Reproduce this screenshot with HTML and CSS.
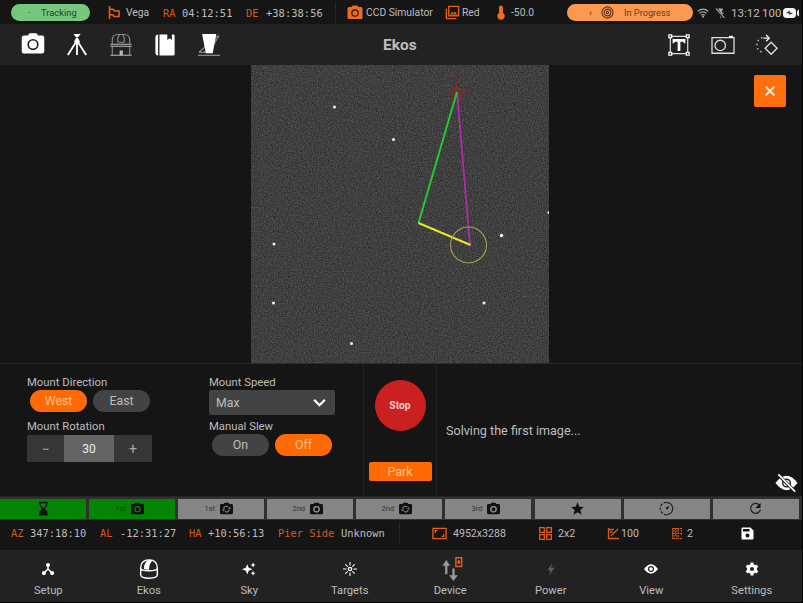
FILE: index.html
```html
<!DOCTYPE html>
<html lang="en">
<head>
<meta charset="utf-8">
<title>Ekos</title>
<link rel="stylesheet" href="styles.css">
</head>
<body>
<svg class="defs" aria-hidden="true">
  <symbol id="camera" viewBox="0 0 24 24"><path fill-rule="evenodd" d="M9 2 7.200 4H4a2 2 0 0 0-2 2v12a2 2 0 0 0 2 2h16a2 2 0 0 0 2-2V6a2 2 0 0 0-2-2h-3.200L15 2zM12 7a5 5 0 1 1 0 10a5 5 0 0 1 0-10z"/><circle cx="12" cy="12" r="3.500"/></symbol>
  <symbol id="camera-ring" viewBox="1 1 22 20"><path fill-rule="evenodd" d="M9 2 7.200 4H4a2 2 0 0 0-2 2v12a2 2 0 0 0 2 2h16a2 2 0 0 0 2-2V6a2 2 0 0 0-2-2h-3.200L15 2zM12 7a5 5 0 1 1 0 10a5 5 0 0 1 0-10z M12 9a3 3 0 1 0 0 6a3 3 0 0 0 0-6z"/><circle cx="12" cy="12" r="3.100"/><circle cx="12" cy="12" r="4" fill="none" stroke="#858585" stroke-width="1.800"/></symbol>
  <symbol id="camera-sync" viewBox="1 1 22 20"><path d="M9 2 7.200 4H4a2 2 0 0 0-2 2v12a2 2 0 0 0 2 2h16a2 2 0 0 0 2-2V6a2 2 0 0 0-2-2h-3.200L15 2z"/><path d="M7.500 11.500a4.500 4.500 0 0 1 7-3M16.500 12.500a4.500 4.500 0 0 1-7 3" fill="none" stroke="#858585" stroke-width="1.600"/><path d="M14 11.500h5l-2.500-3zM5 12.500h5l-2.500 3z" fill="#858585"/></symbol>
</svg>
<div class="app">
  <header class="status">
    <span class="pill tracking"><i>·</i>Tracking</span>
    <svg class="flag" viewBox="0 0 12 13"><path d="M1.500 0v4M1.500 8.500V13M1.500 3l4 .5 1 1.500H11v5.500H6L5 9 1.500 8.500M1.500 3v5.500" fill="none" stroke="#e45f1b" stroke-width="1.600"/></svg>
    <span>Vega</span>
    <span class="mono key">RA</span><span class="mono val">04:12:51</span>
    <span class="mono key">DE</span><span class="mono val">+38:38:56</span>
    <span class="rule"></span>
    <svg class="i16 orange" viewBox="0 0 24 24"><use href="#camera"/></svg>
    <span>CCD Simulator</span>
    <svg class="i16" viewBox="0 0 16 16"><path d="M4 1.500h10.500v10H4zM1.500 4v10.500H12" fill="none" stroke="#e45f1b" stroke-width="1.500"/><path d="m5.500 10 2-3 1.500 2 1.500-2 2.500 3z" fill="#e45f1b"/></svg>
    <span>Red</span>
    <svg class="thermo" viewBox="0 0 8 15"><path d="M2 8V2.500a2 2 0 0 1 4 0V8a3.700 3.700 0 1 1-4 0z" fill="#f06a1b"/></svg>
    <span>-50.0</span>
    <span class="pill progress"><b>‹</b><svg viewBox="0 0 14 14"><g fill="none" stroke="#5b3418" stroke-width="1.200"><circle cx="7" cy="7" r="6"/><circle cx="7" cy="7" r="3.600"/><circle cx="7" cy="7" r="1.200"/></g></svg><span>In Progress</span></span>
    <svg class="i12" viewBox="0 0 12 12"><g fill="none" stroke="#aaa" stroke-width="1.300"><path d="M.7 4.200Q6 0 11.300 4.200M2.500 6.200Q6 3.500 9.500 6.200M4.200 8.200Q6 7 7.800 8.200"/></g><circle cx="6" cy="9.700" r="1" fill="#aaa"/></svg>
    <svg class="i12" viewBox="0 0 12 12"><path d="M3 1.500h5L7 5l2 2H6.500v4h-1V7H3l2-2z" fill="#aaa"/><path d="m1 2 8 9" stroke="#151515" stroke-width="2.500"/><path d="m1 1.500 8.500 9.500" stroke="#bbb" stroke-width="1.100"/></svg>
    <span class="clock">13:12</span><span class="clock">100</span>
    <svg class="battery" viewBox="0 0 16 10"><rect x="0" y="0" width="13" height="10" rx="3.500" fill="#f4f4f4"/><path d="M16 1.500a4 4 0 0 0-2 1.700v3.600a4 4 0 0 0 2 1.700" fill="#f4f4f4"/><path d="m3 5 4-2.500-.5 2L10 5 6 7l.6-1.500z" fill="#222"/></svg>
  </header>

  <div class="toolbar">
    <svg viewBox="0 0 24 24" class="cam-big"><use href="#camera"/></svg>
    <svg viewBox="0 0 24 24"><path d="M8 0h8l-3 3.500h-2z"/><path d="M12 6v17M12 7 2 23M12 7l10 16" fill="none" stroke="#fff" stroke-width="2"/><path d="M11 4h2l2.500 5h-7z"/></svg>
    <svg viewBox="0 0 24 24"><g fill="none" stroke="#8b8b8b" stroke-width="1.200"><path d="M2.500 10.500V7q0-6.500 6-6.500h7q6 0 6 6.500v3.500M8.500 9V4l2-3.500M15.500 9V4l-2-3.500M8.500 9h7M2.500 14v9M21.500 14v9"/></g><path d="M.5 10.500h23v1.200H.5zM.5 12.800h23v1.200H.5zM10.500 18h3.500v5h-3.500zM.5 22.500h23v1.200H.5z" fill="#bbb"/></svg>
    <svg viewBox="0 0 24 24"><path d="M4.500.5v23Q1.500 23.500 1.500 20V4Q1.500.5 4.500.5zM6 .5h8.500v6l2.500-2 2.500 2v-6h1.500q1.500 0 1.500 1.500v20q0 1.500-1.500 1.500H6z"/></svg>
    <svg viewBox="0 0 24 24"><path d="M0 23.200h24M1 20 22 2v3M1 20q9 1 14-5l6-10" fill="none" stroke="#888" stroke-width="1.400"/><path d="M4.500 0h15.500l-4 21h-7.500z"/></svg>
    <h1>Ekos</h1>
    <svg viewBox="0 0 24 24"><path d="M2.500 2.500h19v19h-19z" fill="none" stroke="#ddd" stroke-width="1.300"/><path d="M5 5.500h14v4.500h-1.500l-1-1.500h-3V18.500h-3V8.500h-3l-1 1.500H5z"/><g fill="#222" stroke="#fff" stroke-width="1.400"><path d="M1 1h3v3H1zM20 1h3v3h-3zM1 20h3v3H1zM20 20h3v3h-3z"/></g></svg>
    <svg viewBox="0 0 24 24"><g fill="none" stroke="#ddd" stroke-width="1.400"><path d="M0 4h24v17H0z"/><circle cx="9" cy="12.500" r="5.700"/></g><path d="M18.500 2h4.500v2h-4.500z"/></svg>
    <svg viewBox="0 0 24 24"><path d="m16.500 9 6.500 6.500-6.500 6.500-6.500-6.500z" fill="none" stroke="#ddd" stroke-width="1.500"/><path d="M8 4.500h6M11 1l3.500 3.500L11 8" fill="none" stroke="#eee" stroke-width="1.500"/><path d="M7 4q-6 2-6 8t6 8" fill="none" stroke="#ccc" stroke-width="1.500" stroke-dasharray="1.500 3.200"/></svg>
  </div>

  <main class="stage">
    <svg class="frame" viewBox="0 0 298 298">
      <filter id="grain" x="0" y="0" width="100%" height="100%" color-interpolation-filters="sRGB"><feTurbulence type="fractalNoise" baseFrequency=".8" numOctaves="2" seed="4"/><feColorMatrix values=".26 0 0 0 .12 .26 0 0 0 .12 .26 0 0 0 .12 0 0 0 0 1"/></filter>
      <rect width="298" height="298" fill="#414141"/>
      <rect width="298" height="298" filter="url(#grain)"/>
      <g fill="#f2f2f2"><circle cx="83.500" cy="42" r="1.500"/><circle cx="142.500" cy="74.500" r="1.500"/><circle cx="23" cy="179" r="1.500"/><circle cx="22.500" cy="238" r="1.500"/><circle cx="233" cy="238" r="1.500"/><circle cx="100.500" cy="278.500" r="1.500"/><circle cx="250.500" cy="170.500" r="1.700"/><circle cx="298" cy="147.500" r="1.500"/></g>
      <path d="m205 15 3 8 11 4-8 3 4 7-9-5-8 5 4-7-8-2 9-4z" fill="#9b2424" opacity=".4"/>
      <path d="M205.500 9v19m-14-1h29" stroke="#952020" opacity=".55" stroke-dasharray="2 2"/>
      <path d="M206 27 219 180" stroke="#b32bb3" stroke-width="1.700"/>
      <path d="M206 27 167.500 158" stroke="#24c735" stroke-width="2"/>
      <path d="m167.500 158 52 22" stroke="#eee32c" stroke-width="2"/>
      <circle cx="217.500" cy="180" r="18" fill="none" stroke="#aaa052" stroke-width="1.100"/>
    </svg>
    <button class="close"><svg viewBox="0 0 12 12"><path d="m1.500 1.500 9 9m0-9-9 9" stroke="#ffe9d9" stroke-width="1.800"/></svg></button>
  </main>

  <section class="controls">
    <div class="group">
      <label>Mount Direction</label>
      <div class="choices"><button class="chip on">West</button><button class="chip">East</button></div>
      <label class="second">Mount Rotation</label>
      <div class="spin"><button>−</button><output>30</output><button>+</button></div>
    </div>
    <div class="group">
      <label>Mount Speed</label>
      <div class="select">Max<svg viewBox="0 0 12 8"><path d="m1 1.500 5 5 5-5" fill="none" stroke="#fff" stroke-width="2"/></svg></div>
      <label class="slew">Manual Slew</label>
      <div class="choices"><button class="chip">On</button><button class="chip on">Off</button></div>
    </div>
    <div class="actions"><button class="stop">Stop</button><button class="park">Park</button></div>
    <div class="message"><p>Solving the first image...</p>
      <svg class="hide" viewBox="0 0 24 20"><path d="M.5 10Q12-5 23.500 10 12 25 .5 10z" fill="#fff"/><circle cx="12" cy="10" r="4" fill="none" stroke="#222" stroke-width="1.500"/><circle cx="12" cy="10" r="1.600" fill="#333"/><path d="m3 1 18 18" stroke="#181818" stroke-width="3.500"/><path d="m3.500 1 17.500 18" stroke="#fff" stroke-width="1.700"/></svg>
    </div>
  </section>

  <div class="steps">
    <div class="done"><svg viewBox="0 0 24 24"><path d="M5 1h14v2.500h-1v4l-4 4.500 4 4.500v4h1V23H5v-2.500h1v-4l4-4.500-4-4.500v-4H5zM8 3.500V7l4 4.500L16 7V3.500z" fill-rule="evenodd"/></svg></div>
    <div class="done"><small>1st</small><svg class="shot" viewBox="1 1 22 20"><path d="M9 2 7.200 4H4a2 2 0 0 0-2 2v12a2 2 0 0 0 2 2h16a2 2 0 0 0 2-2V6a2 2 0 0 0-2-2h-3.200L15 2z"/><circle cx="12" cy="12" r="4" fill="none" stroke="#048404" stroke-width="1.800"/></svg></div>
    <div><small>1st</small><svg class="shot"><use href="#camera-sync"/></svg></div>
    <div><small>2nd</small><svg class="shot"><use href="#camera-ring"/></svg></div>
    <div><small>2nd</small><svg class="shot"><use href="#camera-sync"/></svg></div>
    <div><small>3rd</small><svg class="shot"><use href="#camera-ring"/></svg></div>
    <div><svg viewBox="0 0 24 24"><path d="m12 2 3 7 7 .600-5.500 5 2 7.400-6.500-4-6.500 4 2-7.400L2 9.600 9 9z"/></svg></div>
    <div><svg viewBox="0 0 24 24"><path d="M12 2a10 10 0 0 1 0 20" fill="none" stroke="#222" stroke-width="2"/><path d="M12 22a10 10 0 0 1 0-20" fill="none" stroke="#222" stroke-width="2" stroke-dasharray="4 2.500"/><path d="m16.500 7.500-3 6.500-3-3z"/></svg></div>
    <div><svg viewBox="0 0 24 24"><path d="M18.500 6.500A8 8 0 1 0 20 14" fill="none" stroke="#222" stroke-width="2"/><path d="M20 3v8h-8z"/></svg></div>
  </div>

  <div class="info">
    <span class="mono key">AZ</span><span class="mono">347:18:10</span>
    <span class="mono key">AL</span><span class="mono">-12:31:27</span>
    <span class="mono key">HA</span><span class="mono">+10:56:13</span>
    <span class="mono key">Pier Side</span><span class="mono">Unknown</span>
    <span class="rule"></span>
    <svg class="res" viewBox="0 0 16 13"><path d="M1 1h14v11H1z" fill="none" stroke="#e45f1b" stroke-width="1.400"/><path d="M3.500 6V3.500H6M10 9.500h2.500V7" fill="none" stroke="#e45f1b" stroke-width="1.300"/></svg>
    <span>4952x3288</span>
    <svg class="small" viewBox="0 0 13 13"><path d="M.7.700H5.300V5.300H.7zM7.700.700h4.600v4.600H7.700zM.7 7.700h4.600v4.600H.7zM7.700 7.700h4.600v4.600H7.700z" fill="none" stroke="#e45f1b" stroke-width="1.300"/></svg>
    <span>2x2</span>
    <svg class="small" viewBox="0 0 13 13"><path d="M1.500 1v10.500H12M4 9l7-7M2 2.500h5M3 5h2.500" fill="none" stroke="#d65a1a" stroke-width="1.300"/></svg>
    <span>100</span>
    <svg class="small" viewBox="0 0 13 13"><path d="M1 1.500h10M1 4h7M1 6.500h10M1 9h7M1 11.500h10" stroke="#d65a1a" stroke-width="1.100" stroke-dasharray="3 .8"/><path d="M1.500 1v11M4.500 1v8M7.500 2v9M10.500 3v6" stroke="#b54e18" stroke-dasharray="2 1"/></svg>
    <span>2</span>
    <svg class="save" viewBox="0 0 13 13"><path fill-rule="evenodd" d="M1.500.5H9.500L12.500 3.500v8q0 1-1 1h-10q-1 0-1-1v-10q0-1 1-1zM2 2v2.500h6.500V2zM6.500 6.500a2 2 0 1 0 0 4a2 2 0 0 0 0-4z" fill="#fff"/></svg>
  </div>

  <nav class="nav">
    <a><svg viewBox="0 0 24 24"><circle cx="12" cy="5" r="3.500"/><circle cx="5" cy="19" r="3.500"/><circle cx="19" cy="19" r="3.500"/><path d="M12 5v8M12 12l-7 7M12 12l7 7" fill="none" stroke="#fff" stroke-width="2.500"/></svg>Setup</a>
    <a><svg class="dome" viewBox="0 0 24 24"><path d="M2 11Q2 1 12 1t10 10v8q0 4-10 4T2 19zM2 11q0 3 10 3t10-3" fill="none" stroke="#fff" stroke-width="1.700"/><path d="M6 12Q6 3 12 1q5 0 4 1-4 4-4 11-4 0-6-1z"/></svg>Ekos</a>
    <a><svg viewBox="0 0 24 24"><path d="m9 4 2.500 6L18 12.500 11.500 15 9 21.500 6.500 15 0 12.500 6.500 10zM19 1l1.300 3L23 5.300 20.300 6.500 19 9.500l-1.300-3L15 5.300 17.700 4zM19 15l1.300 3 2.700 1.200-2.700 1.300-1.300 3-1.300-3L15 19.200l2.700-1.200z"/></svg>Sky</a>
    <a><svg viewBox="0 0 24 24"><circle cx="12" cy="12" r="4"/><path d="M12 0v6M12 18v6M0 12h6M18 12h6M4 4l4 4M16 16l4 4M20 4l-4 4M8 16l-4 4" fill="none" stroke="#fff" stroke-width="1.800"/><circle cx="12" cy="12" r="1.600" fill="#222"/></svg>Targets</a>
    <a><svg class="device" viewBox="0 0 22 26"><path d="M4 18V8M11.500 12v9" stroke="#999" stroke-width="2.400"/><path d="M0 9l4-6 4 6zM7 19l4.500 6 4.500-6z" fill="#999"/><path d="M14 .8h6v9h-6z" fill="none" stroke="#e45f1b" stroke-width="1.500"/><path d="M15.500 4.200h3v2h-3zM16.200 3.400h1.600v4h-1.600z" fill="#e45f1b"/></svg>Device</a>
    <a><svg viewBox="0 0 24 24"><path d="M14 2 6 14h5l-2 9 9-13h-6z" fill="#5c5c5c"/></svg>Power</a>
    <a><svg viewBox="0 0 24 24"><path d="M0 12Q12-4 24 12 12 28 0 12z"/><circle cx="12" cy="12" r="4.200" fill="none" stroke="#222" stroke-width="2"/></svg>View</a>
    <a><svg viewBox="0 0 24 24"><circle cx="12" cy="12" r="6" fill="none" stroke="#fff" stroke-width="5"/><path d="M12 1v5M12 18v5M2.500 6.500l4 2.500M17.500 15l4 2.500M21.500 6.500l-4 2.500M6.500 15l-4 2.500" stroke="#fff" stroke-width="5"/></svg>Settings</a>
  </nav>
</div>
</body>
</html>
```
FILE: styles.css
```css
* { box-sizing: border-box; }
body { margin: 0; background: #000; font-family: Roboto, "Noto Sans", sans-serif; color: #bdbdbd; }
button { border: 0; padding: 0; font: inherit; color: inherit; }
svg { display: block; fill: #fff; overflow: visible; }
.defs { display: none; }
.app { width: 802px; height: 602px; display: grid; grid-template-rows: 24px 41px 298px 134px 23px 30px 52px; background: #151515; overflow: hidden; }
.mono { font-family: "DejaVu Sans Mono", monospace; font-size: 10.4px; }
.key { color: #d65a1a; }
.rule { width: 1px; height: 22px; background: #262626; }
.orange { fill: #f06a1b; }

.status { display: grid; align-items: center; padding: 1px 0 0 11px; white-space: nowrap; font-size: 10.300px;
  grid-template-columns: 97px 18px 37px 19px 64px 20px 69px 12px 19px 79px 17px 35px 14px 56px 130px 18px 16px 31px 21px 16px; }
.pill { height: 17px; border-radius: 9px; display: flex; align-items: center; }
.tracking { width: 79px; background: #77c67e; color: #1f4526; padding-left: 17px; font-size: 9.400px; }
.tracking i { width: 13px; font-style: normal; }
.progress { width: 126px; background: #fc9951; color: #6b3a1b; font-size: 9.200px; padding-left: 22px; }
.progress b { width: 12px; font-weight: 500; }
.progress svg { width: 13px; height: 13px; margin-right: 10px; }
.flag { width: 12px; height: 13px; }
.i16 { width: 15px; height: 15px; }
.i16.orange { width: 18px; height: 18px; margin-left: -1px; }
.i12 { width: 12px; height: 12px; }
.thermo { width: 8px; height: 15px; }
.battery { width: 16px; height: 10px; }
.clock { font-size: 11.500px; }
.status .val { letter-spacing: .05px; }

.toolbar { display: grid; grid-template-columns: repeat(5, 44px) 1fr repeat(3, 44px); justify-items: center; align-items: center; background: #222; padding: 0 13px 0 11px; }
.toolbar svg { width: 22px; height: 22px; }
.toolbar .cam-big { width: 28px; height: 27px; }
h1 { margin: 0; justify-self: start; padding-left: 152px; font-size: 15.500px; font-weight: 700; line-height: 18px; }

.stage { display: grid; grid-template-columns: 251px 298px 1fr; }
.frame { grid-column: 2; width: 298px; height: 298px; overflow: hidden; }
.close { width: 32px; height: 32px; margin: 10px 16px 0 auto; border-radius: 2px; background: #ff6f0a; display: grid; place-items: center; }
.close svg { width: 12px; height: 12px; }

.controls { display: grid; grid-template-columns: 182px 154px 73px 1fr; padding-left: 27px; border-top: 1px solid #2b2b2b; border-bottom: 1px solid #252525; }
.group { padding-top: 12px; }
label { display: block; height: 14px; line-height: 14px; font-size: 11.300px; }
label.second { margin-top: 8px; }
label.slew { margin-top: 5px; }
.choices { display: flex; gap: 6px; padding-left: 3px; }
.chip { width: 57px; height: 22px; border-radius: 11px; background: #434343; font-size: 12.300px; }
.chip.on { background: #ff6a05; color: #ffc08f; }
.spin { display: grid; grid-template-columns: 37px 50px 38px; width: 125px; height: 27px; margin-top: 1px; background: #373635; }
.spin button { background: none; font-size: 14px; color: #aaa; }
.spin output { display: grid; place-items: center; background: #646464; color: #eee; font-size: 12px; }
.select { width: 126px; height: 25px; background: #434343; border-radius: 2px; padding: 0 9px 0 7px; display: flex; align-items: center; justify-content: space-between; font-size: 12.300px; }
.select svg { width: 13px; height: 9px; }
.actions { display: flex; flex-direction: column; align-items: center; padding-top: 16px; border-left: 1px solid #222; }
.stop { width: 51px; height: 51px; border-radius: 50%; background: #cb2020; color: #f4c7c7; font-weight: 700; font-size: 10.300px; }
.park { width: 63px; height: 19px; margin-top: 31px; border-radius: 2px; background: #ff6a05; color: #ffc695; font-size: 12.500px; }
.message { display: flex; justify-content: space-between; align-items: flex-start; border-left: 1px solid #222; padding-left: 9px; }
.message p { margin: 59px 0 0; font-size: 12.600px; line-height: 16px; }
.hide { width: 23px; height: 20px; margin: 109px 4px 0 0; }

.steps { display: grid; grid-template-columns: repeat(9, 86px); column-gap: 3.100px; padding: 1.500px 0 1px; background: #303030; }
.steps div { display: flex; align-items: center; justify-content: center; gap: 4px; background: #858585; color: #333; }
.steps .done { background: #048404; color: #045204; }
.steps svg { width: 15px; height: 15px; fill: #111; }
.steps .shot { width: 15px; height: 13px; margin-right: 4px; }
.steps small { font-size: 7.500px; }

.info { display: grid; align-items: center; white-space: nowrap; padding: 0 0 4px 11px; font-size: 10.600px;
  grid-template-columns: 19px 70px 20px 69px 19px 70px 63px 58px 33px 21px 86px 19px 49px 14px 50px 16px 54px 14px; }
.res { width: 15px; height: 13px; }
.small { width: 13px; height: 13px; }
.save { width: 13px; height: 13px; }

.nav { display: grid; grid-template-columns: repeat(8, 1fr); margin-left: -2px; background: #222; border-top: 1px solid #262626; }
.nav { font-size: 11.200px; }
.nav a { display: grid; grid-template-rows: 32px 16px; justify-items: center; align-items: center; align-content: start; line-height: 16px; }
.nav svg { width: 14px; height: 14px; margin-top: 4px; }
.nav .dome { width: 20px; height: 22px; }
.nav .device { width: 22px; height: 25px; margin-left: 5px; }
```
